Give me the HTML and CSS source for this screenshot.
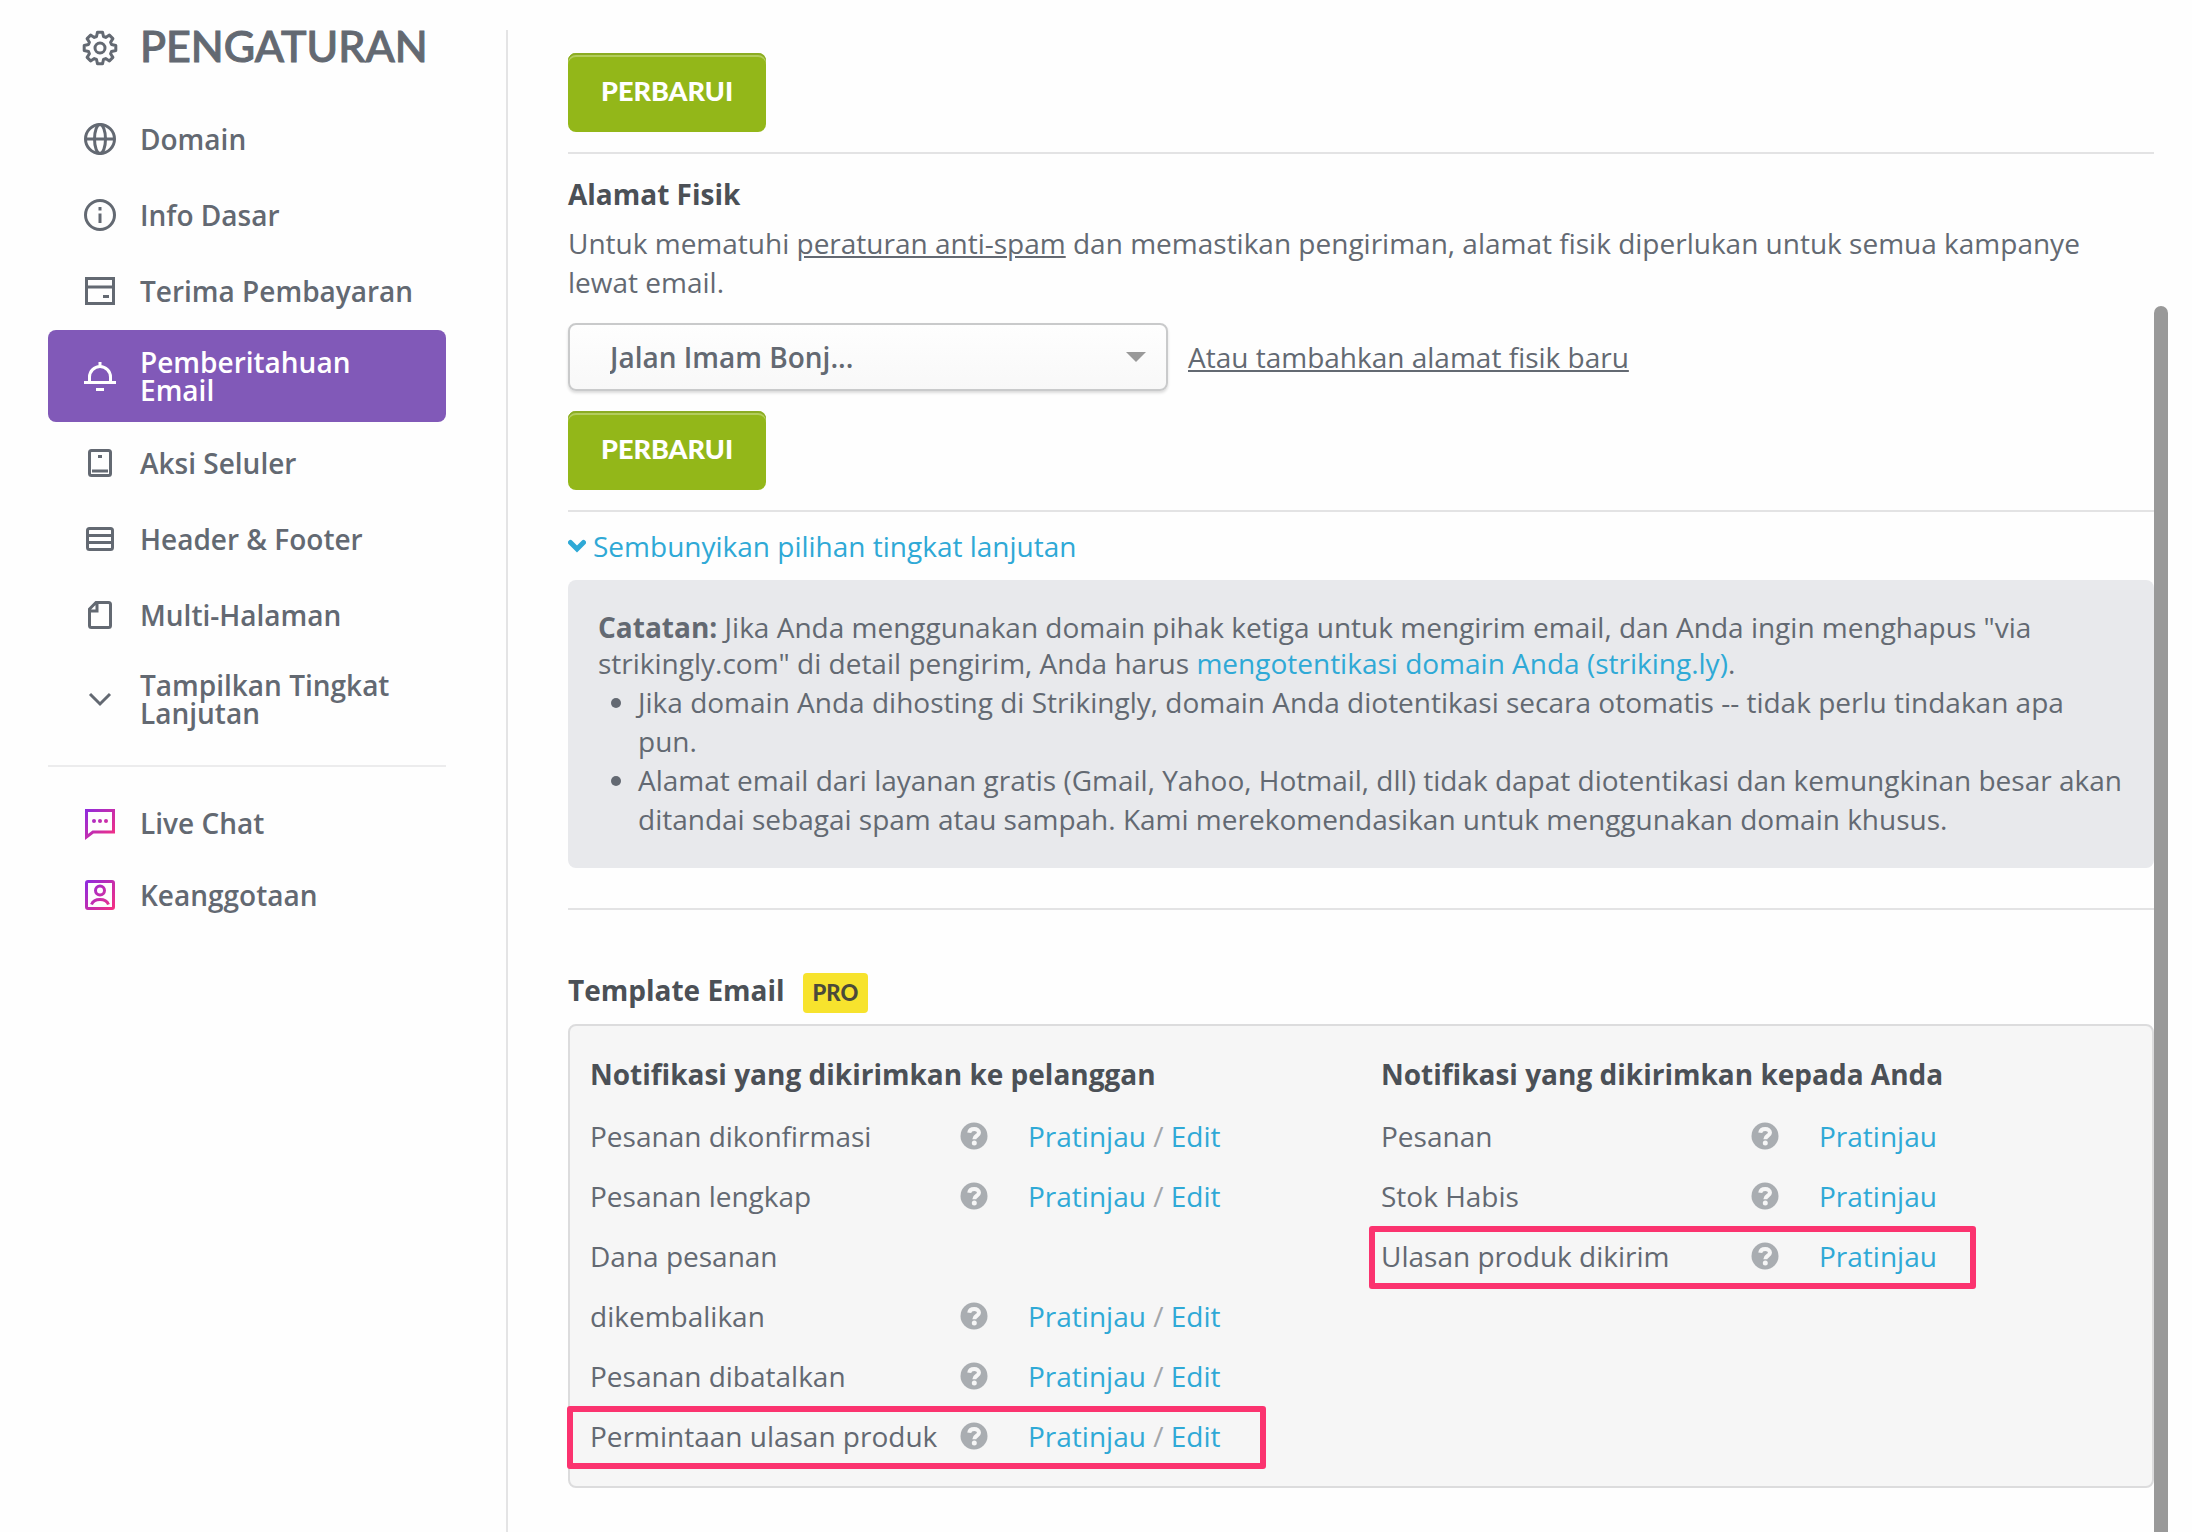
FILE: index.html
```html
<!DOCTYPE html>
<html lang="id">
<head>
<meta charset="utf-8">
<title>Pengaturan</title>
<meta name="viewport" content="width=device-width, initial-scale=1">
<link rel="stylesheet" href="styles.css">
</head>
<body>
<svg class="defs" aria-hidden="true">
  <defs>
    <linearGradient id="brand" gradientUnits="userSpaceOnUse" x1="2" y1="4" x2="34" y2="32">
      <stop offset="0" stop-color="#8a2be2"/>
      <stop offset="1" stop-color="#f9307f"/>
    </linearGradient>
    <symbol id="help" viewBox="0 0 28 28">
      <circle cx="14" cy="14" r="13.500" fill="#a9adb1"/>
      <path d="M9.200 10.800C9.600 8.300 11.500 7 14.200 7C17 7 19 8.500 19 10.800C19 13.800 14.300 13.800 14.300 17.200" fill="none" stroke="#f6f6f6" stroke-width="4"/>
      <circle cx="14.300" cy="21" r="2.500" fill="#f6f6f6"/>
    </symbol>
  </defs>
</svg>

<aside class="sidebar">
  <h1 class="title">
    <svg class="icon" viewBox="0 0 36 36" aria-hidden="true"><path stroke-linejoin="round" d="M29.500 14.500L33.800 15.500V20.500L29.500 21.500L28.600 23.700L30.900 27.400L27.400 30.900L23.700 28.600L21.500 29.500L20.500 33.800H15.500L14.500 29.500L12.300 28.600L8.600 30.900L5.100 27.400L7.400 23.700L6.500 21.500L2.200 20.500V15.500L6.500 14.500L7.400 12.300L5.100 8.600L8.600 5.100L12.300 7.400L14.500 6.500L15.500 2.200H20.500L21.500 6.500L23.700 7.400L27.400 5.100L30.900 8.600L28.600 12.300Z"/><circle cx="18" cy="18" r="5"/></svg>
    <span>PENGATURAN</span>
  </h1>
  <nav class="menu">
    <a class="item" href="#domain">
      <svg class="icon" viewBox="0 0 36 36" aria-hidden="true"><circle cx="18" cy="18" r="14.500"/><ellipse cx="18" cy="18" rx="5.500" ry="14.500"/><path d="M3.500 18h29"/></svg>
      <span>Domain</span></a>
    <a class="item" href="#info">
      <svg class="icon" viewBox="0 0 36 36" aria-hidden="true"><circle cx="18" cy="18" r="14.500"/><path d="M18 16.500v9.500M18 10v3.500"/></svg>
      <span>Info Dasar</span></a>
    <a class="item" href="#pembayaran">
      <svg class="icon" viewBox="0 0 36 36" aria-hidden="true"><path d="M4.500 5.500h27v25h-27zM4.500 14h27M21 23.500h6"/></svg>
      <span>Terima Pembayaran</span></a>
    <a class="item active" href="#email" aria-current="page">
      <svg class="icon" viewBox="0 0 36 36" aria-hidden="true"><path d="M2 24.500h32M7.500 24V19a10.500 10.500 0 0 1 21 0v5M18 4v5M14 31.500h8"/></svg>
      <span>Pemberitahuan Email</span></a>
    <a class="item" href="#seluler">
      <svg class="icon" viewBox="0 0 36 36" aria-hidden="true"><rect x="7.500" y="5.500" width="21" height="25" rx="2"/><path d="M10 26h16M16 11.500h4"/></svg>
      <span>Aksi Seluler</span></a>
    <a class="item" href="#header">
      <svg class="icon" viewBox="0 0 36 36" aria-hidden="true"><rect x="5.500" y="7.500" width="25" height="21" rx="2"/><path d="M5.500 14.500h25M5.500 21.500h25"/></svg>
      <span>Header &amp; Footer</span></a>
    <a class="item" href="#halaman">
      <svg class="icon" viewBox="0 0 36 36" aria-hidden="true"><path d="M14 5.500h12.500a2 2 0 0 1 2 2v21a2 2 0 0 1-2 2h-17a2 2 0 0 1-2-2V12zM15 6v8H8"/></svg>
      <span>Multi-Halaman</span></a>
    <a class="item" href="#lanjutan">
      <svg class="icon" viewBox="0 0 36 36" aria-hidden="true"><path d="M8 13l10 10 10-10"/></svg>
      <span>Tampilkan Tingkat Lanjutan</span></a>
  </nav>
  <nav class="menu support">
    <a class="item" href="#chat">
      <svg class="icon brand" viewBox="0 0 36 36" aria-hidden="true"><path d="M4.500 5.500h27v21.500H11L4.500 32z"/><g class="dots"><circle cx="12" cy="16" r="2"/><circle cx="18" cy="16" r="2"/><circle cx="24" cy="16" r="2"/></g></svg>
      <span>Live Chat</span></a>
    <a class="item" href="#keanggotaan">
      <svg class="icon brand" viewBox="0 0 36 36" aria-hidden="true"><rect x="4.500" y="4.500" width="27" height="27" rx="1.500"/><circle cx="18" cy="13.500" r="4.500"/><path d="M9.500 27.500q2-5 8.500-5t8.500 5"/></svg>
      <span>Keanggotaan</span></a>
  </nav>
</aside>

<main class="content">
  <section class="block">
    <button class="button" type="button">PERBARUI</button>
  </section>

  <section class="block address">
    <h2 class="heading"><label for="address">Alamat Fisik</label></h2>
    <p class="intro">Untuk mematuhi <a href="#spam">peraturan anti-spam</a> dan memastikan pengiriman, alamat fisik diperlukan untuk semua kampanye lewat email.</p>
    <div class="picker">
      <div class="select">
        <select id="address"><option>Jalan Imam Bonj...</option></select>
        <svg class="arrow" viewBox="0 0 20 10" aria-hidden="true"><path d="M0 0h20L10 10z"/></svg>
      </div>
      <a href="#baru">Atau tambahkan alamat fisik baru</a>
    </div>
    <button class="button" type="button">PERBARUI</button>
  </section>

  <section class="block advanced">
    <a class="toggle" href="#opsi"><svg class="chevron" viewBox="0 0 18 14" aria-hidden="true"><path d="M2.500 3.500L9 10l6.500-6.500"/></svg>Sembunyikan pilihan tingkat lanjutan</a>
    <div class="note">
      <p><strong>Catatan:</strong> Jika Anda menggunakan domain pihak ketiga untuk mengirim email, dan Anda ingin menghapus "via strikingly.com" di detail pengirim, Anda harus <a href="#otentikasi">mengotentikasi domain Anda (striking.ly)</a>.</p>
      <ul>
        <li>Jika domain Anda dihosting di Strikingly, domain Anda diotentikasi secara otomatis -- tidak perlu tindakan apa pun.</li>
        <li>Alamat email dari layanan gratis (Gmail, Yahoo, Hotmail, dll) tidak dapat diotentikasi dan kemungkinan besar akan ditandai sebagai spam atau sampah. Kami merekomendasikan untuk menggunakan domain khusus.</li>
      </ul>
    </div>
  </section>

  <section class="templates">
    <h2 class="heading">Template Email <span class="badge">PRO</span></h2>
    <div class="panel">
      <div class="column">
        <h3 class="heading">Notifikasi yang dikirimkan ke pelanggan</h3>
        <ul class="rows">
          <li class="row"><span>Pesanan dikonfirmasi</span><svg class="help"><use href="#help"/></svg><span class="links"><a href="#p1">Pratinjau</a> / <a href="#e1">Edit</a></span></li>
          <li class="row"><span>Pesanan lengkap</span><svg class="help"><use href="#help"/></svg><span class="links"><a href="#p2">Pratinjau</a> / <a href="#e2">Edit</a></span></li>
          <li class="row"><span>Dana pesanan dikembalikan</span><svg class="help"><use href="#help"/></svg><span class="links"><a href="#p3">Pratinjau</a> / <a href="#e3">Edit</a></span></li>
          <li class="row"><span>Pesanan dibatalkan</span><svg class="help"><use href="#help"/></svg><span class="links"><a href="#p4">Pratinjau</a> / <a href="#e4">Edit</a></span></li>
          <li class="row marked marked-wide"><span>Permintaan ulasan produk</span><svg class="help"><use href="#help"/></svg><span class="links"><a href="#p5">Pratinjau</a> / <a href="#e5">Edit</a></span></li>
        </ul>
      </div>
      <div class="column">
        <h3 class="heading">Notifikasi yang dikirimkan kepada Anda</h3>
        <ul class="rows">
          <li class="row"><span>Pesanan</span><svg class="help"><use href="#help"/></svg><span class="links"><a href="#p6">Pratinjau</a></span></li>
          <li class="row"><span>Stok Habis</span><svg class="help"><use href="#help"/></svg><span class="links"><a href="#p7">Pratinjau</a></span></li>
          <li class="row marked"><span>Ulasan produk dikirim</span><svg class="help"><use href="#help"/></svg><span class="links"><a href="#p8">Pratinjau</a></span></li>
        </ul>
      </div>
    </div>
  </section>
</main>
<div class="thumb"></div>
</body>
</html>
```
FILE: styles.css
```css
*, *::after { box-sizing: border-box; }

body {
  margin: 0;
  min-height: 100vh;
  display: flex;
  position: relative;
  padding: 30px 38px 0 48px;
  background: #fefefe;
  color: #636972;
  font: 28px/39px "Open Sans", "Noto Sans", sans-serif;
}

h1, h2, h3, p, ul { margin: 0; padding: 0; }
a { color: inherit; }
.defs { position: absolute; width: 0; height: 0; }

/* Sidebar */
.sidebar {
  flex: none;
  width: 460px;
  padding-right: 60px;
  border-right: 2px solid #e4e4e5;
}

.title {
  display: flex;
  align-items: flex-start;
  gap: 22px;
  height: 36px;
  margin-bottom: 35px;
  padding-left: 34px;
  font: 500 43px/32px Lato, sans-serif;
  -webkit-text-stroke: 1px currentColor;
}

.icon {
  flex: none;
  width: 36px;
  height: 36px;
  fill: none;
  stroke: currentColor;
  stroke-width: 3;
}

.brand { stroke: url(#brand); }
.dots { fill: url(#brand); stroke: none; }

.item {
  display: flex;
  align-items: center;
  gap: 22px;
  min-height: 76px;
  padding: 18px 20px 18px 34px;
  font-weight: 600;
  line-height: 28px;
  text-decoration: none;
}

.item.active {
  margin: 1px 0 3px;
  border-radius: 8px;
  background: #8159b8;
  color: #fff;
}

.support {
  margin-top: 20px;
  padding-top: 20px;
  border-top: 2px solid #ececed;
}

.support .item { min-height: 72px; }

/* Main column */
.content {
  flex: 1;
  min-width: 0;
  padding-left: 60px;
}

.block {
  padding-bottom: 20px;
  border-bottom: 2px solid #e3e3e4;
}

.block:first-child { padding-top: 23px; }

.heading {
  color: #4b5056;
  font-size: 28px;
  font-weight: 700;
  line-height: 40px;
}

.button {
  display: block;
  height: 79px;
  padding: 0 33px 4px;
  border: 0;
  border-radius: 8px;
  background: #93b719;
  box-shadow: inset 0 2px #8bac22, inset 0 4px #b3cd5c;
  color: #fff;
  font: 900 27px/40px Lato, sans-serif;
}

.address { padding-top: 20px; }
.intro { padding: 10px 0 21px; }

.picker {
  display: flex;
  align-items: center;
  gap: 20px;
  margin-bottom: 20px;
}

.select {
  display: grid;
  width: 600px;
}

.select select {
  grid-area: 1 / 1;
  height: 68px;
  padding: 0 60px 0 40px;
  appearance: none;
  border: 2px solid #c9cacb;
  border-radius: 8px;
  background: linear-gradient(#fefefe, #f8f8f8);
  box-shadow: 0 2px 3px rgba(0, 0, 0, .14);
  color: inherit;
  font: inherit;
  font-weight: 600;
}

.arrow {
  grid-area: 1 / 1;
  place-self: center end;
  width: 20px;
  height: 10px;
  margin-right: 22px;
  fill: #999;
  pointer-events: none;
}

.advanced {
  padding: 14px 0 40px;
}

.advanced a, .links a {
  color: #2fa9d6;
  text-decoration: none;
}

.toggle {
  display: flex;
  align-items: center;
  gap: 7px;
  height: 40px;
  margin-bottom: 14px;
}

.chevron {
  width: 18px;
  height: 14px;
  fill: none;
  stroke: currentColor;
  stroke-width: 5;
  stroke-linecap: round;
}

.note {
  padding: 29px 30px;
  border-radius: 8px;
  background: #e8e9ec;
}

.note p { line-height: 36px; }
.note ul { padding: 2px 0 0 40px; }

/* Template panel */
.templates { padding-top: 60px; }

.templates h2 {
  display: flex;
  gap: 18px;
  align-items: flex-start;
}

.badge {
  margin-top: 3px;
  padding: 0 10px;
  border-radius: 4px;
  background: #f7e32d;
  color: #4b4a3a;
  font: 900 22px/40px Lato, sans-serif;
}

.panel {
  display: grid;
  grid-template-columns: 1fr 1fr;
  margin-top: 11px;
  padding: 28px 0 20px;
  border: 2px solid #dcdcdd;
  border-radius: 8px;
  background: #f6f6f6;
}

.column { padding-left: 20px; }
.column .heading { margin-bottom: 12px; }
.rows { list-style: none; }

.row {
  display: grid;
  grid-template-columns: 350px 28px 1fr;
  column-gap: 20px;
  align-items: end;
  position: relative;
  line-height: 60px;
}

.help {
  width: 28px;
  height: 28px;
  margin-bottom: 16px;
}

.links {
  padding-left: 20px;
  color: #a3a6aa;
}

.marked::after {
  content: "";
  position: absolute;
  top: 0;
  left: -12px;
  width: 607px;
  height: 63px;
  border: 6px solid #fb336f;
  border-radius: 3px;
  pointer-events: none;
}

.marked-wide::after {
  left: -23px;
  width: 699px;
}

/* Scroll indicator */
.thumb {
  position: absolute;
  top: 306px;
  right: 24px;
  bottom: 0;
  width: 14px;
  border-radius: 7px 7px 0 0;
  background: #999;
}
```
